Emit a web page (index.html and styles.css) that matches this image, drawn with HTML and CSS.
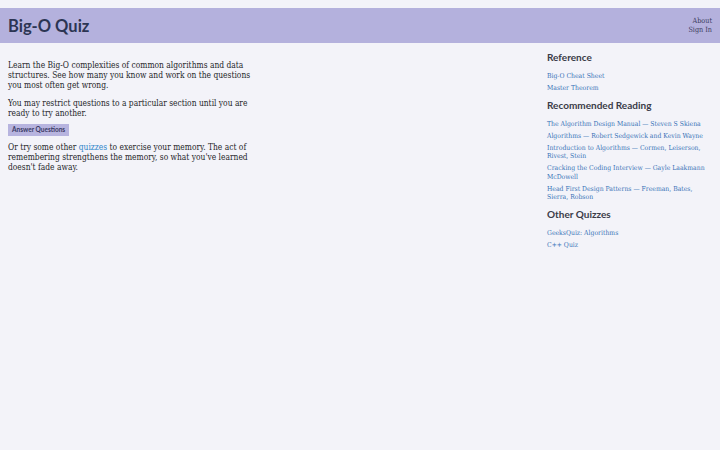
FILE: index.html
```html
<!DOCTYPE html>
<html lang="en">
<head>
<meta charset="utf-8">
<title>Big-O Quiz</title>
<link rel="stylesheet" href="styles.css">
</head>
<body>
<header class="site-header">
  <h1 class="site-title">Big-O Quiz</h1>
  <nav class="site-nav">
    <a href="#">About</a>
    <a href="#">Sign In</a>
  </nav>
</header>
<div class="layout">
  <main class="main">
    <p>Learn the Big-O complexities of common algorithms and data structures. See how many you know and work on the questions you most often get wrong.</p>
    <p>You may restrict questions to a particular section until you are ready to try another.</p>
    <a class="btn" href="#">Answer Questions</a>
    <p>Or try some other <a class="inline-link" href="#">quizzes</a> to exercise your memory. The act of remembering strengthens the memory, so what you've learned doesn't fade away.</p>
  </main>
  <aside class="sidebar">
    <h2>Reference</h2>
    <ul>
      <li><a href="#">Big-O Cheat Sheet</a></li>
      <li><a href="#">Master Theorem</a></li>
    </ul>
    <h2>Recommended Reading</h2>
    <ul>
      <li><a href="#">The Algorithm Design Manual — Steven S Skiena</a></li>
      <li><a href="#">Algorithms — Robert Sedgewick and Kevin Wayne</a></li>
      <li><a href="#">Introduction to Algorithms — Cormen, Leiserson, Rivest, Stein</a></li>
      <li><a href="#">Cracking the Coding Interview — Gayle Laakmann McDowell</a></li>
      <li><a href="#">Head First Design Patterns — Freeman, Bates, Sierra, Robson</a></li>
    </ul>
    <h2>Other Quizzes</h2>
    <ul>
      <li><a href="#">GeeksQuiz: Algorithms</a></li>
      <li><a href="#">C++ Quiz</a></li>
    </ul>
  </aside>
</div>
</body>
</html>
```
FILE: styles.css
```css
html, body {
  margin: 0;
  padding: 0;
}
body {
  background: #f3f3f9;
  padding-top: 8px;
  font-family: "DejaVu Serif Condensed", "DejaVu Serif", "Liberation Serif", serif;
  color: #1f1f29;
  min-height: 442px;
}
a {
  text-decoration: none;
}
.site-header {
  background: #b4b1dd;
  height: 35px;
  display: flex;
  align-items: center;
  justify-content: space-between;
  padding: 0 8px;
}
.site-title {
  margin: 0;
  font-family: Lato, "Noto Sans", sans-serif;
  font-weight: 700;
  font-size: 16.5px;
  color: #2c3553;
}
.site-nav {
  display: flex;
  flex-direction: column;
  align-items: flex-end;
  font-size: 7.2px;
  line-height: 8.5px;
}
.site-nav a {
  color: #3b3b5c;
}
.layout {
  display: grid;
  grid-template-columns: 252px 1fr 165px;
  padding: 0 8px;
}
.main {
  grid-column: 1;
  padding-top: 17px;
  font-size: 8.4px;
  line-height: 10px;
}
.main p {
  margin: 0 0 8px;
}
.inline-link {
  color: #2f86c9;
}
.btn {
  display: block;
  width: fit-content;
  background: #b7b4df;
  color: #3a3a66;
  font-family: Lato, "Noto Sans", sans-serif;
  font-weight: 700;
  font-size: 6.5px;
  line-height: 12px;
  padding: 0 4px;
  margin: -2px 0 6px;
}
.sidebar {
  grid-column: 3;
  padding-top: 8px;
}
.sidebar h2 {
  margin: 0 0 9px;
  font-family: Lato, "Noto Sans", sans-serif;
  font-weight: 700;
  font-size: 10px;
  line-height: 12px;
  color: #3a3b48;
}
.sidebar ul {
  list-style: none;
  margin: 0 0 6px;
  padding: 0;
}
.sidebar li {
  font-size: 6.8px;
  line-height: 8.5px;
  margin-bottom: 3.5px;
}
.sidebar a {
  color: #3a73b8;
}
```
